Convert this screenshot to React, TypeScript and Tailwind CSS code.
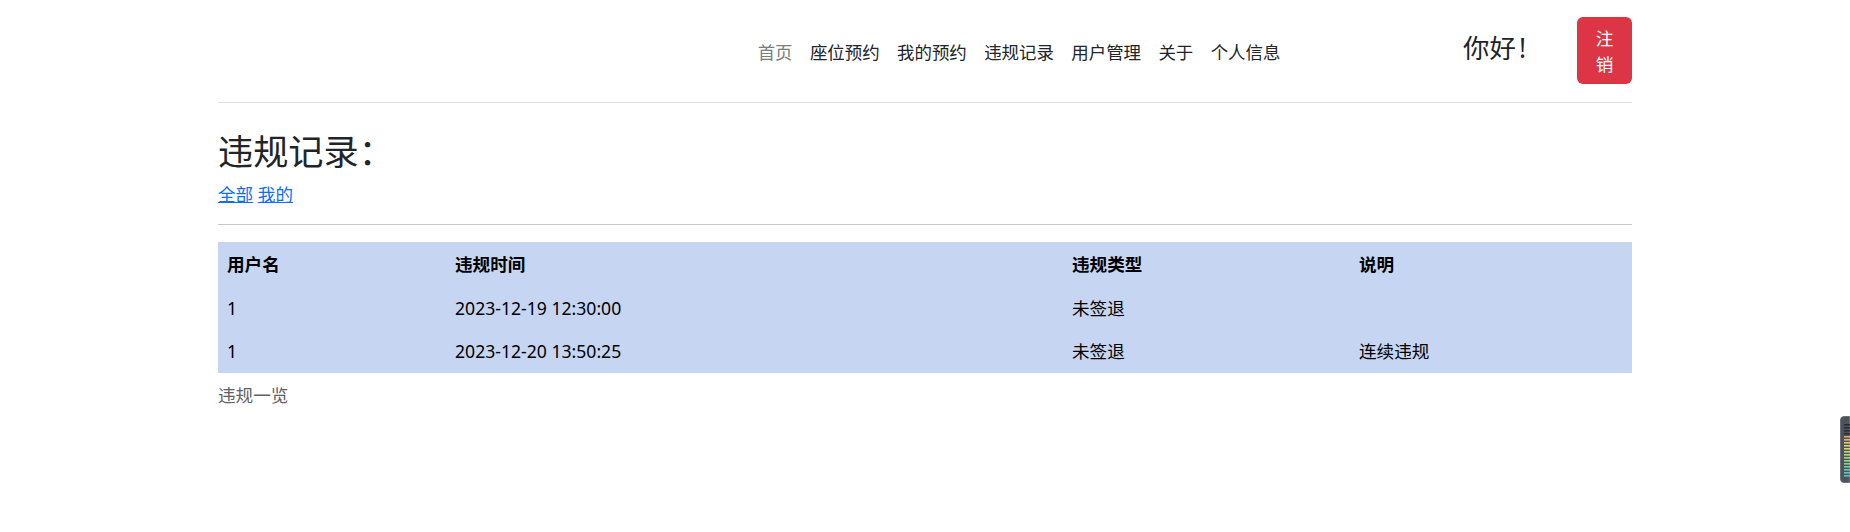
import React from "react";

const navItems = ["座位预约", "我的预约", "违规记录", "用户管理", "关于", "个人信息"];

const rows = [
  { user: "1", time: "2023-12-19 12:30:00", type: "未签退", note: "" },
  { user: "1", time: "2023-12-20 13:50:25", type: "未签退", note: "连续违规" },
];

function Meter() {
  const colors = [
    "#2b2e36", "#2b2e36", "#2b2e36", "#2b2e36",
    "#e2a06a", "#e6b36a", "#e7c46a", "#e2d06c", "#d7d86f", "#c6da72",
    "#b4da78", "#a2d97f", "#8fd889", "#7dd596", "#6fd1a3", "#66ccb0", "#5fc6bc", "#5cc0c6",
  ];
  return (
    <div className="fixed right-0 top-[416px] w-[10px] h-[67px] rounded-l-[4px] bg-[#4e525d] border border-[#6b6f7a]">
      <svg width="10" height="67" viewBox="0 0 10 67" className="block">
        {colors.map((c, i) => (
          <rect key={i} x="3" y={7 + i * 3} width="6" height="1.6" fill={c} />
        ))}
      </svg>
    </div>
  );
}

export default function App() {
  return (
    <div
      className="min-h-[532px] bg-white text-[#212529] text-[17.6px] leading-[1.5]"
      style={{ fontFamily: '"Noto Sans", "Noto Sans CJK SC", sans-serif' }}
    >
      <div className="mx-[218px] w-[1414px]">
        <header className="flex items-center h-[103px] border-b border-[#dee2e6]">
          <nav className="flex ml-[531px] mt-[2px] text-[17.45px]">
            <a className="px-[8.7px] text-[#7b7e81]">首页</a>
            {navItems.map((n) => (
              <a key={n} className="px-[8.7px] text-[#212529]">
                {n}
              </a>
            ))}
          </nav>
          <div className="ml-auto flex text-[26.4px] leading-[1.2] mr-[51px] -mt-[4px]">
            <span>你好</span>
            <span className="ml-[3px]">!</span>
          </div>
          <button className="w-[55px] h-[67px] mb-[1px] rounded-[6px] bg-[#dc3545] text-white text-[17.6px] leading-[26px] flex flex-col items-center justify-center">
            <span>注</span>
            <span>销</span>
          </button>
        </header>

        <main className="pt-[27px]">
          <h2 className="text-[35.2px] leading-[1.2] mb-[8.8px] font-normal">违规记录：</h2>
          <div className="leading-[26.4px]">
            <a className="text-[#0d6efd] underline">全部</a>{" "}
            <a className="text-[#0d6efd] underline">我的</a>
          </div>
          <div className="my-[17px] h-px bg-[#c6c7c8]" />
          <div className="bg-[#c6d6f2] text-black">
            <div className="grid grid-cols-[228px_617px_287px_282px] font-bold">
              <div className="px-[9px] py-[8.8px] leading-[26px]">用户名</div>
              <div className="px-[9px] py-[8.8px] leading-[26px]">违规时间</div>
              <div className="px-[9px] py-[8.8px] leading-[26px]">违规类型</div>
              <div className="px-[9px] py-[8.8px] leading-[26px]">说明</div>
            </div>
            {rows.map((r, i) => (
              <div key={i} className="grid grid-cols-[228px_617px_287px_282px]">
                <div className="px-[9px] py-[8.8px] leading-[26px]">{r.user}</div>
                <div className="px-[9px] py-[8.8px] leading-[26px]">{r.time}</div>
                <div className="px-[9px] py-[8.8px] leading-[26px]">{r.type}</div>
                <div className="px-[9px] py-[8.8px] leading-[26px]">{r.note}</div>
              </div>
            ))}
          </div>
          <div className="pt-[8.8px] leading-[26.4px] text-[#5f6266]">违规一览</div>
        </main>
      </div>
      <Meter />
    </div>
  );
}
